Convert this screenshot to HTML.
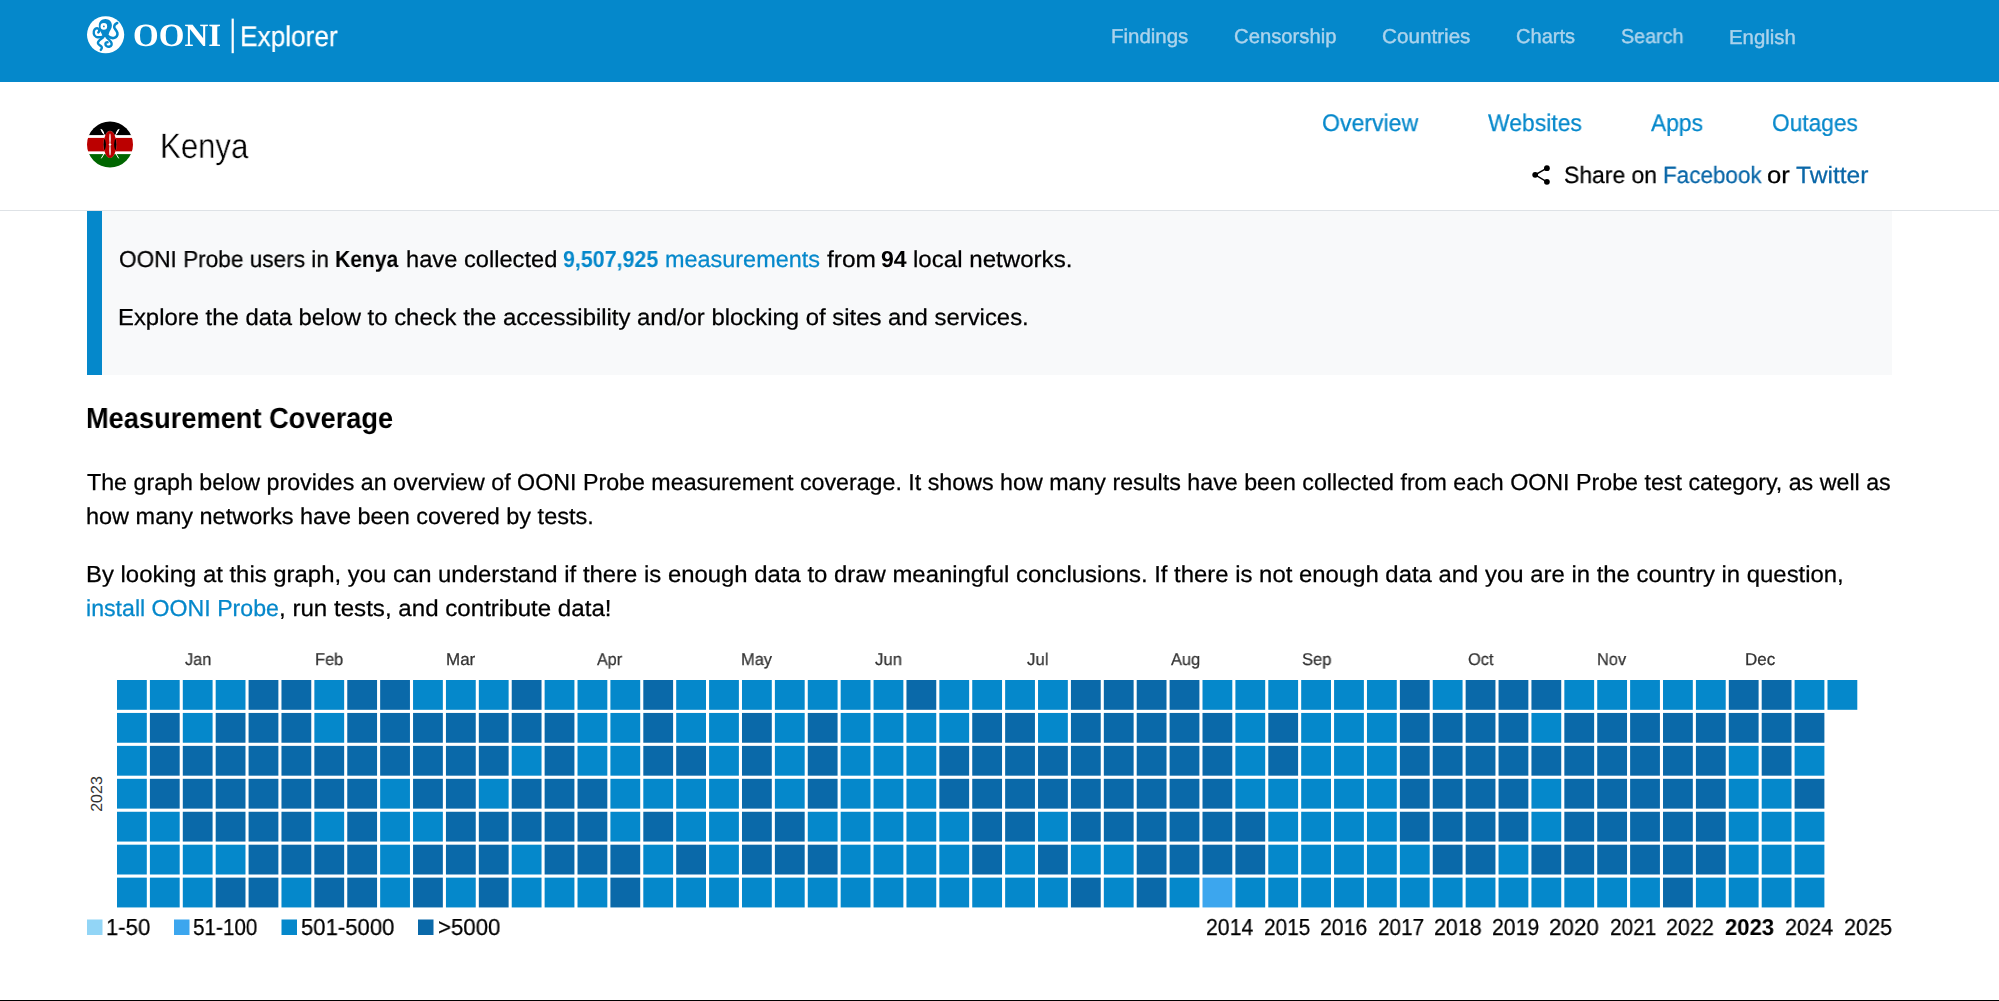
<!DOCTYPE html>
<html><head><meta charset="utf-8"><title>OONI Explorer - Kenya</title>
<style>
html,body{margin:0;padding:0;background:#fff;}
body{width:1999px;height:1001px;position:relative;overflow:hidden;font-family:'Liberation Sans',sans-serif;text-rendering:geometricPrecision;}
.t{position:absolute;white-space:nowrap;line-height:1;transform-origin:0 0;will-change:transform;}
.bar{position:absolute;left:0;top:0;width:1999px;height:82px;background:#0588cb;}
.sep{position:absolute;left:0;top:210px;width:1999px;height:1px;background:#dee2e6;}
.box{position:absolute;left:87px;top:211px;width:1805px;height:164px;background:#f8f9fa;}
.box .bl{position:absolute;left:0;top:0;width:14.5px;height:164px;background:#0588cb;}
.grid{position:absolute;left:0;top:0;}
.bottom{position:absolute;left:0;top:1000px;width:1999px;height:1px;background:#000;}
svg.icon{position:absolute;left:0;top:0;}
</style></head>
<body>
<div class="bar"></div>
<div class="sep"></div>
<div class="box"><div class="bl"></div></div>
<svg class="grid" width="1999" height="1001" viewBox="0 0 1999 1001">
<g font-family="'Liberation Sans', sans-serif" font-size="16" fill="#333">
<text transform="translate(101.5,794) rotate(-90)" text-anchor="middle">2023</text></g>
<rect x="117.00" y="680.00" width="29.8" height="29.8" fill="#0588cb"/><rect x="149.89" y="680.00" width="29.8" height="29.8" fill="#0588cb"/><rect x="182.79" y="680.00" width="29.8" height="29.8" fill="#0588cb"/><rect x="215.68" y="680.00" width="29.8" height="29.8" fill="#0588cb"/><rect x="248.58" y="680.00" width="29.8" height="29.8" fill="#0a69a9"/><rect x="281.47" y="680.00" width="29.8" height="29.8" fill="#0a69a9"/><rect x="314.36" y="680.00" width="29.8" height="29.8" fill="#0588cb"/><rect x="347.26" y="680.00" width="29.8" height="29.8" fill="#0a69a9"/><rect x="380.15" y="680.00" width="29.8" height="29.8" fill="#0a69a9"/><rect x="413.05" y="680.00" width="29.8" height="29.8" fill="#0588cb"/><rect x="445.94" y="680.00" width="29.8" height="29.8" fill="#0588cb"/><rect x="478.83" y="680.00" width="29.8" height="29.8" fill="#0588cb"/><rect x="511.73" y="680.00" width="29.8" height="29.8" fill="#0a69a9"/><rect x="544.62" y="680.00" width="29.8" height="29.8" fill="#0588cb"/><rect x="577.52" y="680.00" width="29.8" height="29.8" fill="#0588cb"/><rect x="610.41" y="680.00" width="29.8" height="29.8" fill="#0588cb"/><rect x="643.30" y="680.00" width="29.8" height="29.8" fill="#0a69a9"/><rect x="676.20" y="680.00" width="29.8" height="29.8" fill="#0588cb"/><rect x="709.09" y="680.00" width="29.8" height="29.8" fill="#0588cb"/><rect x="741.99" y="680.00" width="29.8" height="29.8" fill="#0588cb"/><rect x="774.88" y="680.00" width="29.8" height="29.8" fill="#0588cb"/><rect x="807.77" y="680.00" width="29.8" height="29.8" fill="#0588cb"/><rect x="840.67" y="680.00" width="29.8" height="29.8" fill="#0588cb"/><rect x="873.56" y="680.00" width="29.8" height="29.8" fill="#0588cb"/><rect x="906.46" y="680.00" width="29.8" height="29.8" fill="#0a69a9"/><rect x="939.35" y="680.00" width="29.8" height="29.8" fill="#0588cb"/><rect x="972.24" y="680.00" width="29.8" height="29.8" fill="#0588cb"/><rect x="1005.14" y="680.00" width="29.8" height="29.8" fill="#0588cb"/><rect x="1038.03" y="680.00" width="29.8" height="29.8" fill="#0588cb"/><rect x="1070.93" y="680.00" width="29.8" height="29.8" fill="#0a69a9"/><rect x="1103.82" y="680.00" width="29.8" height="29.8" fill="#0a69a9"/><rect x="1136.71" y="680.00" width="29.8" height="29.8" fill="#0a69a9"/><rect x="1169.61" y="680.00" width="29.8" height="29.8" fill="#0a69a9"/><rect x="1202.50" y="680.00" width="29.8" height="29.8" fill="#0588cb"/><rect x="1235.40" y="680.00" width="29.8" height="29.8" fill="#0588cb"/><rect x="1268.29" y="680.00" width="29.8" height="29.8" fill="#0588cb"/><rect x="1301.18" y="680.00" width="29.8" height="29.8" fill="#0588cb"/><rect x="1334.08" y="680.00" width="29.8" height="29.8" fill="#0588cb"/><rect x="1366.97" y="680.00" width="29.8" height="29.8" fill="#0588cb"/><rect x="1399.87" y="680.00" width="29.8" height="29.8" fill="#0a69a9"/><rect x="1432.76" y="680.00" width="29.8" height="29.8" fill="#0588cb"/><rect x="1465.65" y="680.00" width="29.8" height="29.8" fill="#0a69a9"/><rect x="1498.55" y="680.00" width="29.8" height="29.8" fill="#0a69a9"/><rect x="1531.44" y="680.00" width="29.8" height="29.8" fill="#0a69a9"/><rect x="1564.34" y="680.00" width="29.8" height="29.8" fill="#0588cb"/><rect x="1597.23" y="680.00" width="29.8" height="29.8" fill="#0588cb"/><rect x="1630.12" y="680.00" width="29.8" height="29.8" fill="#0588cb"/><rect x="1663.02" y="680.00" width="29.8" height="29.8" fill="#0588cb"/><rect x="1695.91" y="680.00" width="29.8" height="29.8" fill="#0588cb"/><rect x="1728.81" y="680.00" width="29.8" height="29.8" fill="#0a69a9"/><rect x="1761.70" y="680.00" width="29.8" height="29.8" fill="#0a69a9"/><rect x="1794.59" y="680.00" width="29.8" height="29.8" fill="#0588cb"/><rect x="1827.49" y="680.00" width="29.8" height="29.8" fill="#0588cb"/><rect x="117.00" y="712.94" width="29.8" height="29.8" fill="#0588cb"/><rect x="149.89" y="712.94" width="29.8" height="29.8" fill="#0a69a9"/><rect x="182.79" y="712.94" width="29.8" height="29.8" fill="#0588cb"/><rect x="215.68" y="712.94" width="29.8" height="29.8" fill="#0a69a9"/><rect x="248.58" y="712.94" width="29.8" height="29.8" fill="#0a69a9"/><rect x="281.47" y="712.94" width="29.8" height="29.8" fill="#0a69a9"/><rect x="314.36" y="712.94" width="29.8" height="29.8" fill="#0588cb"/><rect x="347.26" y="712.94" width="29.8" height="29.8" fill="#0a69a9"/><rect x="380.15" y="712.94" width="29.8" height="29.8" fill="#0a69a9"/><rect x="413.05" y="712.94" width="29.8" height="29.8" fill="#0a69a9"/><rect x="445.94" y="712.94" width="29.8" height="29.8" fill="#0a69a9"/><rect x="478.83" y="712.94" width="29.8" height="29.8" fill="#0a69a9"/><rect x="511.73" y="712.94" width="29.8" height="29.8" fill="#0a69a9"/><rect x="544.62" y="712.94" width="29.8" height="29.8" fill="#0a69a9"/><rect x="577.52" y="712.94" width="29.8" height="29.8" fill="#0588cb"/><rect x="610.41" y="712.94" width="29.8" height="29.8" fill="#0588cb"/><rect x="643.30" y="712.94" width="29.8" height="29.8" fill="#0a69a9"/><rect x="676.20" y="712.94" width="29.8" height="29.8" fill="#0588cb"/><rect x="709.09" y="712.94" width="29.8" height="29.8" fill="#0588cb"/><rect x="741.99" y="712.94" width="29.8" height="29.8" fill="#0a69a9"/><rect x="774.88" y="712.94" width="29.8" height="29.8" fill="#0588cb"/><rect x="807.77" y="712.94" width="29.8" height="29.8" fill="#0a69a9"/><rect x="840.67" y="712.94" width="29.8" height="29.8" fill="#0588cb"/><rect x="873.56" y="712.94" width="29.8" height="29.8" fill="#0588cb"/><rect x="906.46" y="712.94" width="29.8" height="29.8" fill="#0588cb"/><rect x="939.35" y="712.94" width="29.8" height="29.8" fill="#0588cb"/><rect x="972.24" y="712.94" width="29.8" height="29.8" fill="#0a69a9"/><rect x="1005.14" y="712.94" width="29.8" height="29.8" fill="#0a69a9"/><rect x="1038.03" y="712.94" width="29.8" height="29.8" fill="#0588cb"/><rect x="1070.93" y="712.94" width="29.8" height="29.8" fill="#0a69a9"/><rect x="1103.82" y="712.94" width="29.8" height="29.8" fill="#0a69a9"/><rect x="1136.71" y="712.94" width="29.8" height="29.8" fill="#0a69a9"/><rect x="1169.61" y="712.94" width="29.8" height="29.8" fill="#0a69a9"/><rect x="1202.50" y="712.94" width="29.8" height="29.8" fill="#0a69a9"/><rect x="1235.40" y="712.94" width="29.8" height="29.8" fill="#0588cb"/><rect x="1268.29" y="712.94" width="29.8" height="29.8" fill="#0a69a9"/><rect x="1301.18" y="712.94" width="29.8" height="29.8" fill="#0588cb"/><rect x="1334.08" y="712.94" width="29.8" height="29.8" fill="#0588cb"/><rect x="1366.97" y="712.94" width="29.8" height="29.8" fill="#0588cb"/><rect x="1399.87" y="712.94" width="29.8" height="29.8" fill="#0a69a9"/><rect x="1432.76" y="712.94" width="29.8" height="29.8" fill="#0a69a9"/><rect x="1465.65" y="712.94" width="29.8" height="29.8" fill="#0a69a9"/><rect x="1498.55" y="712.94" width="29.8" height="29.8" fill="#0a69a9"/><rect x="1531.44" y="712.94" width="29.8" height="29.8" fill="#0588cb"/><rect x="1564.34" y="712.94" width="29.8" height="29.8" fill="#0a69a9"/><rect x="1597.23" y="712.94" width="29.8" height="29.8" fill="#0a69a9"/><rect x="1630.12" y="712.94" width="29.8" height="29.8" fill="#0a69a9"/><rect x="1663.02" y="712.94" width="29.8" height="29.8" fill="#0a69a9"/><rect x="1695.91" y="712.94" width="29.8" height="29.8" fill="#0a69a9"/><rect x="1728.81" y="712.94" width="29.8" height="29.8" fill="#0a69a9"/><rect x="1761.70" y="712.94" width="29.8" height="29.8" fill="#0a69a9"/><rect x="1794.59" y="712.94" width="29.8" height="29.8" fill="#0a69a9"/><rect x="117.00" y="745.88" width="29.8" height="29.8" fill="#0588cb"/><rect x="149.89" y="745.88" width="29.8" height="29.8" fill="#0a69a9"/><rect x="182.79" y="745.88" width="29.8" height="29.8" fill="#0a69a9"/><rect x="215.68" y="745.88" width="29.8" height="29.8" fill="#0a69a9"/><rect x="248.58" y="745.88" width="29.8" height="29.8" fill="#0a69a9"/><rect x="281.47" y="745.88" width="29.8" height="29.8" fill="#0a69a9"/><rect x="314.36" y="745.88" width="29.8" height="29.8" fill="#0a69a9"/><rect x="347.26" y="745.88" width="29.8" height="29.8" fill="#0a69a9"/><rect x="380.15" y="745.88" width="29.8" height="29.8" fill="#0a69a9"/><rect x="413.05" y="745.88" width="29.8" height="29.8" fill="#0a69a9"/><rect x="445.94" y="745.88" width="29.8" height="29.8" fill="#0a69a9"/><rect x="478.83" y="745.88" width="29.8" height="29.8" fill="#0a69a9"/><rect x="511.73" y="745.88" width="29.8" height="29.8" fill="#0588cb"/><rect x="544.62" y="745.88" width="29.8" height="29.8" fill="#0a69a9"/><rect x="577.52" y="745.88" width="29.8" height="29.8" fill="#0588cb"/><rect x="610.41" y="745.88" width="29.8" height="29.8" fill="#0588cb"/><rect x="643.30" y="745.88" width="29.8" height="29.8" fill="#0a69a9"/><rect x="676.20" y="745.88" width="29.8" height="29.8" fill="#0a69a9"/><rect x="709.09" y="745.88" width="29.8" height="29.8" fill="#0588cb"/><rect x="741.99" y="745.88" width="29.8" height="29.8" fill="#0a69a9"/><rect x="774.88" y="745.88" width="29.8" height="29.8" fill="#0588cb"/><rect x="807.77" y="745.88" width="29.8" height="29.8" fill="#0a69a9"/><rect x="840.67" y="745.88" width="29.8" height="29.8" fill="#0588cb"/><rect x="873.56" y="745.88" width="29.8" height="29.8" fill="#0588cb"/><rect x="906.46" y="745.88" width="29.8" height="29.8" fill="#0588cb"/><rect x="939.35" y="745.88" width="29.8" height="29.8" fill="#0a69a9"/><rect x="972.24" y="745.88" width="29.8" height="29.8" fill="#0a69a9"/><rect x="1005.14" y="745.88" width="29.8" height="29.8" fill="#0a69a9"/><rect x="1038.03" y="745.88" width="29.8" height="29.8" fill="#0a69a9"/><rect x="1070.93" y="745.88" width="29.8" height="29.8" fill="#0a69a9"/><rect x="1103.82" y="745.88" width="29.8" height="29.8" fill="#0a69a9"/><rect x="1136.71" y="745.88" width="29.8" height="29.8" fill="#0a69a9"/><rect x="1169.61" y="745.88" width="29.8" height="29.8" fill="#0a69a9"/><rect x="1202.50" y="745.88" width="29.8" height="29.8" fill="#0a69a9"/><rect x="1235.40" y="745.88" width="29.8" height="29.8" fill="#0588cb"/><rect x="1268.29" y="745.88" width="29.8" height="29.8" fill="#0a69a9"/><rect x="1301.18" y="745.88" width="29.8" height="29.8" fill="#0588cb"/><rect x="1334.08" y="745.88" width="29.8" height="29.8" fill="#0588cb"/><rect x="1366.97" y="745.88" width="29.8" height="29.8" fill="#0588cb"/><rect x="1399.87" y="745.88" width="29.8" height="29.8" fill="#0a69a9"/><rect x="1432.76" y="745.88" width="29.8" height="29.8" fill="#0a69a9"/><rect x="1465.65" y="745.88" width="29.8" height="29.8" fill="#0a69a9"/><rect x="1498.55" y="745.88" width="29.8" height="29.8" fill="#0a69a9"/><rect x="1531.44" y="745.88" width="29.8" height="29.8" fill="#0a69a9"/><rect x="1564.34" y="745.88" width="29.8" height="29.8" fill="#0a69a9"/><rect x="1597.23" y="745.88" width="29.8" height="29.8" fill="#0a69a9"/><rect x="1630.12" y="745.88" width="29.8" height="29.8" fill="#0a69a9"/><rect x="1663.02" y="745.88" width="29.8" height="29.8" fill="#0a69a9"/><rect x="1695.91" y="745.88" width="29.8" height="29.8" fill="#0a69a9"/><rect x="1728.81" y="745.88" width="29.8" height="29.8" fill="#0588cb"/><rect x="1761.70" y="745.88" width="29.8" height="29.8" fill="#0a69a9"/><rect x="1794.59" y="745.88" width="29.8" height="29.8" fill="#0588cb"/><rect x="117.00" y="778.82" width="29.8" height="29.8" fill="#0588cb"/><rect x="149.89" y="778.82" width="29.8" height="29.8" fill="#0a69a9"/><rect x="182.79" y="778.82" width="29.8" height="29.8" fill="#0a69a9"/><rect x="215.68" y="778.82" width="29.8" height="29.8" fill="#0a69a9"/><rect x="248.58" y="778.82" width="29.8" height="29.8" fill="#0a69a9"/><rect x="281.47" y="778.82" width="29.8" height="29.8" fill="#0a69a9"/><rect x="314.36" y="778.82" width="29.8" height="29.8" fill="#0a69a9"/><rect x="347.26" y="778.82" width="29.8" height="29.8" fill="#0a69a9"/><rect x="380.15" y="778.82" width="29.8" height="29.8" fill="#0588cb"/><rect x="413.05" y="778.82" width="29.8" height="29.8" fill="#0a69a9"/><rect x="445.94" y="778.82" width="29.8" height="29.8" fill="#0a69a9"/><rect x="478.83" y="778.82" width="29.8" height="29.8" fill="#0588cb"/><rect x="511.73" y="778.82" width="29.8" height="29.8" fill="#0a69a9"/><rect x="544.62" y="778.82" width="29.8" height="29.8" fill="#0a69a9"/><rect x="577.52" y="778.82" width="29.8" height="29.8" fill="#0a69a9"/><rect x="610.41" y="778.82" width="29.8" height="29.8" fill="#0588cb"/><rect x="643.30" y="778.82" width="29.8" height="29.8" fill="#0588cb"/><rect x="676.20" y="778.82" width="29.8" height="29.8" fill="#0588cb"/><rect x="709.09" y="778.82" width="29.8" height="29.8" fill="#0588cb"/><rect x="741.99" y="778.82" width="29.8" height="29.8" fill="#0a69a9"/><rect x="774.88" y="778.82" width="29.8" height="29.8" fill="#0588cb"/><rect x="807.77" y="778.82" width="29.8" height="29.8" fill="#0a69a9"/><rect x="840.67" y="778.82" width="29.8" height="29.8" fill="#0588cb"/><rect x="873.56" y="778.82" width="29.8" height="29.8" fill="#0588cb"/><rect x="906.46" y="778.82" width="29.8" height="29.8" fill="#0588cb"/><rect x="939.35" y="778.82" width="29.8" height="29.8" fill="#0a69a9"/><rect x="972.24" y="778.82" width="29.8" height="29.8" fill="#0a69a9"/><rect x="1005.14" y="778.82" width="29.8" height="29.8" fill="#0a69a9"/><rect x="1038.03" y="778.82" width="29.8" height="29.8" fill="#0a69a9"/><rect x="1070.93" y="778.82" width="29.8" height="29.8" fill="#0a69a9"/><rect x="1103.82" y="778.82" width="29.8" height="29.8" fill="#0a69a9"/><rect x="1136.71" y="778.82" width="29.8" height="29.8" fill="#0a69a9"/><rect x="1169.61" y="778.82" width="29.8" height="29.8" fill="#0a69a9"/><rect x="1202.50" y="778.82" width="29.8" height="29.8" fill="#0a69a9"/><rect x="1235.40" y="778.82" width="29.8" height="29.8" fill="#0588cb"/><rect x="1268.29" y="778.82" width="29.8" height="29.8" fill="#0588cb"/><rect x="1301.18" y="778.82" width="29.8" height="29.8" fill="#0588cb"/><rect x="1334.08" y="778.82" width="29.8" height="29.8" fill="#0588cb"/><rect x="1366.97" y="778.82" width="29.8" height="29.8" fill="#0588cb"/><rect x="1399.87" y="778.82" width="29.8" height="29.8" fill="#0a69a9"/><rect x="1432.76" y="778.82" width="29.8" height="29.8" fill="#0a69a9"/><rect x="1465.65" y="778.82" width="29.8" height="29.8" fill="#0a69a9"/><rect x="1498.55" y="778.82" width="29.8" height="29.8" fill="#0a69a9"/><rect x="1531.44" y="778.82" width="29.8" height="29.8" fill="#0588cb"/><rect x="1564.34" y="778.82" width="29.8" height="29.8" fill="#0a69a9"/><rect x="1597.23" y="778.82" width="29.8" height="29.8" fill="#0a69a9"/><rect x="1630.12" y="778.82" width="29.8" height="29.8" fill="#0a69a9"/><rect x="1663.02" y="778.82" width="29.8" height="29.8" fill="#0a69a9"/><rect x="1695.91" y="778.82" width="29.8" height="29.8" fill="#0a69a9"/><rect x="1728.81" y="778.82" width="29.8" height="29.8" fill="#0588cb"/><rect x="1761.70" y="778.82" width="29.8" height="29.8" fill="#0588cb"/><rect x="1794.59" y="778.82" width="29.8" height="29.8" fill="#0a69a9"/><rect x="117.00" y="811.76" width="29.8" height="29.8" fill="#0588cb"/><rect x="149.89" y="811.76" width="29.8" height="29.8" fill="#0588cb"/><rect x="182.79" y="811.76" width="29.8" height="29.8" fill="#0a69a9"/><rect x="215.68" y="811.76" width="29.8" height="29.8" fill="#0a69a9"/><rect x="248.58" y="811.76" width="29.8" height="29.8" fill="#0a69a9"/><rect x="281.47" y="811.76" width="29.8" height="29.8" fill="#0a69a9"/><rect x="314.36" y="811.76" width="29.8" height="29.8" fill="#0588cb"/><rect x="347.26" y="811.76" width="29.8" height="29.8" fill="#0a69a9"/><rect x="380.15" y="811.76" width="29.8" height="29.8" fill="#0588cb"/><rect x="413.05" y="811.76" width="29.8" height="29.8" fill="#0588cb"/><rect x="445.94" y="811.76" width="29.8" height="29.8" fill="#0a69a9"/><rect x="478.83" y="811.76" width="29.8" height="29.8" fill="#0a69a9"/><rect x="511.73" y="811.76" width="29.8" height="29.8" fill="#0a69a9"/><rect x="544.62" y="811.76" width="29.8" height="29.8" fill="#0a69a9"/><rect x="577.52" y="811.76" width="29.8" height="29.8" fill="#0a69a9"/><rect x="610.41" y="811.76" width="29.8" height="29.8" fill="#0588cb"/><rect x="643.30" y="811.76" width="29.8" height="29.8" fill="#0a69a9"/><rect x="676.20" y="811.76" width="29.8" height="29.8" fill="#0588cb"/><rect x="709.09" y="811.76" width="29.8" height="29.8" fill="#0588cb"/><rect x="741.99" y="811.76" width="29.8" height="29.8" fill="#0a69a9"/><rect x="774.88" y="811.76" width="29.8" height="29.8" fill="#0a69a9"/><rect x="807.77" y="811.76" width="29.8" height="29.8" fill="#0588cb"/><rect x="840.67" y="811.76" width="29.8" height="29.8" fill="#0588cb"/><rect x="873.56" y="811.76" width="29.8" height="29.8" fill="#0588cb"/><rect x="906.46" y="811.76" width="29.8" height="29.8" fill="#0588cb"/><rect x="939.35" y="811.76" width="29.8" height="29.8" fill="#0588cb"/><rect x="972.24" y="811.76" width="29.8" height="29.8" fill="#0a69a9"/><rect x="1005.14" y="811.76" width="29.8" height="29.8" fill="#0a69a9"/><rect x="1038.03" y="811.76" width="29.8" height="29.8" fill="#0588cb"/><rect x="1070.93" y="811.76" width="29.8" height="29.8" fill="#0a69a9"/><rect x="1103.82" y="811.76" width="29.8" height="29.8" fill="#0a69a9"/><rect x="1136.71" y="811.76" width="29.8" height="29.8" fill="#0a69a9"/><rect x="1169.61" y="811.76" width="29.8" height="29.8" fill="#0a69a9"/><rect x="1202.50" y="811.76" width="29.8" height="29.8" fill="#0a69a9"/><rect x="1235.40" y="811.76" width="29.8" height="29.8" fill="#0a69a9"/><rect x="1268.29" y="811.76" width="29.8" height="29.8" fill="#0588cb"/><rect x="1301.18" y="811.76" width="29.8" height="29.8" fill="#0588cb"/><rect x="1334.08" y="811.76" width="29.8" height="29.8" fill="#0588cb"/><rect x="1366.97" y="811.76" width="29.8" height="29.8" fill="#0588cb"/><rect x="1399.87" y="811.76" width="29.8" height="29.8" fill="#0a69a9"/><rect x="1432.76" y="811.76" width="29.8" height="29.8" fill="#0a69a9"/><rect x="1465.65" y="811.76" width="29.8" height="29.8" fill="#0a69a9"/><rect x="1498.55" y="811.76" width="29.8" height="29.8" fill="#0a69a9"/><rect x="1531.44" y="811.76" width="29.8" height="29.8" fill="#0588cb"/><rect x="1564.34" y="811.76" width="29.8" height="29.8" fill="#0a69a9"/><rect x="1597.23" y="811.76" width="29.8" height="29.8" fill="#0a69a9"/><rect x="1630.12" y="811.76" width="29.8" height="29.8" fill="#0a69a9"/><rect x="1663.02" y="811.76" width="29.8" height="29.8" fill="#0a69a9"/><rect x="1695.91" y="811.76" width="29.8" height="29.8" fill="#0a69a9"/><rect x="1728.81" y="811.76" width="29.8" height="29.8" fill="#0588cb"/><rect x="1761.70" y="811.76" width="29.8" height="29.8" fill="#0588cb"/><rect x="1794.59" y="811.76" width="29.8" height="29.8" fill="#0588cb"/><rect x="117.00" y="844.70" width="29.8" height="29.8" fill="#0588cb"/><rect x="149.89" y="844.70" width="29.8" height="29.8" fill="#0588cb"/><rect x="182.79" y="844.70" width="29.8" height="29.8" fill="#0588cb"/><rect x="215.68" y="844.70" width="29.8" height="29.8" fill="#0588cb"/><rect x="248.58" y="844.70" width="29.8" height="29.8" fill="#0a69a9"/><rect x="281.47" y="844.70" width="29.8" height="29.8" fill="#0a69a9"/><rect x="314.36" y="844.70" width="29.8" height="29.8" fill="#0a69a9"/><rect x="347.26" y="844.70" width="29.8" height="29.8" fill="#0a69a9"/><rect x="380.15" y="844.70" width="29.8" height="29.8" fill="#0588cb"/><rect x="413.05" y="844.70" width="29.8" height="29.8" fill="#0a69a9"/><rect x="445.94" y="844.70" width="29.8" height="29.8" fill="#0a69a9"/><rect x="478.83" y="844.70" width="29.8" height="29.8" fill="#0a69a9"/><rect x="511.73" y="844.70" width="29.8" height="29.8" fill="#0588cb"/><rect x="544.62" y="844.70" width="29.8" height="29.8" fill="#0a69a9"/><rect x="577.52" y="844.70" width="29.8" height="29.8" fill="#0a69a9"/><rect x="610.41" y="844.70" width="29.8" height="29.8" fill="#0a69a9"/><rect x="643.30" y="844.70" width="29.8" height="29.8" fill="#0588cb"/><rect x="676.20" y="844.70" width="29.8" height="29.8" fill="#0a69a9"/><rect x="709.09" y="844.70" width="29.8" height="29.8" fill="#0588cb"/><rect x="741.99" y="844.70" width="29.8" height="29.8" fill="#0a69a9"/><rect x="774.88" y="844.70" width="29.8" height="29.8" fill="#0a69a9"/><rect x="807.77" y="844.70" width="29.8" height="29.8" fill="#0a69a9"/><rect x="840.67" y="844.70" width="29.8" height="29.8" fill="#0588cb"/><rect x="873.56" y="844.70" width="29.8" height="29.8" fill="#0588cb"/><rect x="906.46" y="844.70" width="29.8" height="29.8" fill="#0588cb"/><rect x="939.35" y="844.70" width="29.8" height="29.8" fill="#0588cb"/><rect x="972.24" y="844.70" width="29.8" height="29.8" fill="#0a69a9"/><rect x="1005.14" y="844.70" width="29.8" height="29.8" fill="#0588cb"/><rect x="1038.03" y="844.70" width="29.8" height="29.8" fill="#0a69a9"/><rect x="1070.93" y="844.70" width="29.8" height="29.8" fill="#0588cb"/><rect x="1103.82" y="844.70" width="29.8" height="29.8" fill="#0588cb"/><rect x="1136.71" y="844.70" width="29.8" height="29.8" fill="#0a69a9"/><rect x="1169.61" y="844.70" width="29.8" height="29.8" fill="#0a69a9"/><rect x="1202.50" y="844.70" width="29.8" height="29.8" fill="#0a69a9"/><rect x="1235.40" y="844.70" width="29.8" height="29.8" fill="#0a69a9"/><rect x="1268.29" y="844.70" width="29.8" height="29.8" fill="#0588cb"/><rect x="1301.18" y="844.70" width="29.8" height="29.8" fill="#0588cb"/><rect x="1334.08" y="844.70" width="29.8" height="29.8" fill="#0588cb"/><rect x="1366.97" y="844.70" width="29.8" height="29.8" fill="#0588cb"/><rect x="1399.87" y="844.70" width="29.8" height="29.8" fill="#0588cb"/><rect x="1432.76" y="844.70" width="29.8" height="29.8" fill="#0a69a9"/><rect x="1465.65" y="844.70" width="29.8" height="29.8" fill="#0a69a9"/><rect x="1498.55" y="844.70" width="29.8" height="29.8" fill="#0588cb"/><rect x="1531.44" y="844.70" width="29.8" height="29.8" fill="#0a69a9"/><rect x="1564.34" y="844.70" width="29.8" height="29.8" fill="#0a69a9"/><rect x="1597.23" y="844.70" width="29.8" height="29.8" fill="#0a69a9"/><rect x="1630.12" y="844.70" width="29.8" height="29.8" fill="#0a69a9"/><rect x="1663.02" y="844.70" width="29.8" height="29.8" fill="#0a69a9"/><rect x="1695.91" y="844.70" width="29.8" height="29.8" fill="#0a69a9"/><rect x="1728.81" y="844.70" width="29.8" height="29.8" fill="#0588cb"/><rect x="1761.70" y="844.70" width="29.8" height="29.8" fill="#0588cb"/><rect x="1794.59" y="844.70" width="29.8" height="29.8" fill="#0588cb"/><rect x="117.00" y="877.64" width="29.8" height="29.8" fill="#0588cb"/><rect x="149.89" y="877.64" width="29.8" height="29.8" fill="#0588cb"/><rect x="182.79" y="877.64" width="29.8" height="29.8" fill="#0588cb"/><rect x="215.68" y="877.64" width="29.8" height="29.8" fill="#0a69a9"/><rect x="248.58" y="877.64" width="29.8" height="29.8" fill="#0a69a9"/><rect x="281.47" y="877.64" width="29.8" height="29.8" fill="#0588cb"/><rect x="314.36" y="877.64" width="29.8" height="29.8" fill="#0a69a9"/><rect x="347.26" y="877.64" width="29.8" height="29.8" fill="#0a69a9"/><rect x="380.15" y="877.64" width="29.8" height="29.8" fill="#0588cb"/><rect x="413.05" y="877.64" width="29.8" height="29.8" fill="#0a69a9"/><rect x="445.94" y="877.64" width="29.8" height="29.8" fill="#0588cb"/><rect x="478.83" y="877.64" width="29.8" height="29.8" fill="#0a69a9"/><rect x="511.73" y="877.64" width="29.8" height="29.8" fill="#0588cb"/><rect x="544.62" y="877.64" width="29.8" height="29.8" fill="#0588cb"/><rect x="577.52" y="877.64" width="29.8" height="29.8" fill="#0588cb"/><rect x="610.41" y="877.64" width="29.8" height="29.8" fill="#0a69a9"/><rect x="643.30" y="877.64" width="29.8" height="29.8" fill="#0588cb"/><rect x="676.20" y="877.64" width="29.8" height="29.8" fill="#0588cb"/><rect x="709.09" y="877.64" width="29.8" height="29.8" fill="#0588cb"/><rect x="741.99" y="877.64" width="29.8" height="29.8" fill="#0588cb"/><rect x="774.88" y="877.64" width="29.8" height="29.8" fill="#0588cb"/><rect x="807.77" y="877.64" width="29.8" height="29.8" fill="#0588cb"/><rect x="840.67" y="877.64" width="29.8" height="29.8" fill="#0588cb"/><rect x="873.56" y="877.64" width="29.8" height="29.8" fill="#0588cb"/><rect x="906.46" y="877.64" width="29.8" height="29.8" fill="#0588cb"/><rect x="939.35" y="877.64" width="29.8" height="29.8" fill="#0588cb"/><rect x="972.24" y="877.64" width="29.8" height="29.8" fill="#0588cb"/><rect x="1005.14" y="877.64" width="29.8" height="29.8" fill="#0588cb"/><rect x="1038.03" y="877.64" width="29.8" height="29.8" fill="#0588cb"/><rect x="1070.93" y="877.64" width="29.8" height="29.8" fill="#0a69a9"/><rect x="1103.82" y="877.64" width="29.8" height="29.8" fill="#0588cb"/><rect x="1136.71" y="877.64" width="29.8" height="29.8" fill="#0a69a9"/><rect x="1169.61" y="877.64" width="29.8" height="29.8" fill="#0588cb"/><rect x="1202.50" y="877.64" width="29.8" height="29.8" fill="#3ca6ee"/><rect x="1235.40" y="877.64" width="29.8" height="29.8" fill="#0588cb"/><rect x="1268.29" y="877.64" width="29.8" height="29.8" fill="#0588cb"/><rect x="1301.18" y="877.64" width="29.8" height="29.8" fill="#0588cb"/><rect x="1334.08" y="877.64" width="29.8" height="29.8" fill="#0588cb"/><rect x="1366.97" y="877.64" width="29.8" height="29.8" fill="#0588cb"/><rect x="1399.87" y="877.64" width="29.8" height="29.8" fill="#0588cb"/><rect x="1432.76" y="877.64" width="29.8" height="29.8" fill="#0588cb"/><rect x="1465.65" y="877.64" width="29.8" height="29.8" fill="#0588cb"/><rect x="1498.55" y="877.64" width="29.8" height="29.8" fill="#0588cb"/><rect x="1531.44" y="877.64" width="29.8" height="29.8" fill="#0588cb"/><rect x="1564.34" y="877.64" width="29.8" height="29.8" fill="#0588cb"/><rect x="1597.23" y="877.64" width="29.8" height="29.8" fill="#0588cb"/><rect x="1630.12" y="877.64" width="29.8" height="29.8" fill="#0588cb"/><rect x="1663.02" y="877.64" width="29.8" height="29.8" fill="#0a69a9"/><rect x="1695.91" y="877.64" width="29.8" height="29.8" fill="#0588cb"/><rect x="1728.81" y="877.64" width="29.8" height="29.8" fill="#0588cb"/><rect x="1761.70" y="877.64" width="29.8" height="29.8" fill="#0588cb"/><rect x="1794.59" y="877.64" width="29.8" height="29.8" fill="#0588cb"/>
<rect x="87" y="919.5" width="15.5" height="15.5" fill="#92d5f6"/>
<rect x="174" y="919.5" width="15.5" height="15.5" fill="#3ca6ee"/>
<rect x="281.5" y="919.5" width="15.5" height="15.5" fill="#0588cb"/>
<rect x="418" y="919.5" width="15.5" height="15.5" fill="#0a69a9"/>
</svg>
<svg class="icon" width="1999" height="250" viewBox="0 0 1999 250">
  <!-- logo -->
  <circle cx="105.6" cy="34.75" r="18.6" fill="#fff"/>
  <g fill="none" stroke="#0588cb" stroke-width="2.4" stroke-linecap="round">
    <path d="M103.5 36.3 C101 37.3 98.5 37.6 96.2 36.8 C93.6 35.8 92.9 32 94.5 29.6 C95.8 27.7 98.6 27.8 99.2 29.8 C99.5 30.9 99 31.8 98.3 32.4"/>
    <path d="M107.8 36 C109.5 37.4 111.5 38.4 113.8 38 C116.3 37.5 117.9 35.3 117.4 33 C117 31 115.2 29.5 114.5 28 C113.8 26.2 114.5 24 117.2 23" stroke-width="2.6"/>
    <path d="M103.2 37.4 C101.5 38.8 99.3 40 98.2 41.8 C97.3 43.3 98.6 44.6 100.3 45.6 C101.8 46.5 102.7 47.8 100.8 49.9"/>
    <path d="M106.6 37.4 C108.2 38.8 109.8 40.3 111 42 C112.4 44 111.8 46.3 109.3 46.7 C107.2 47 105.3 45.8 105.4 43.8 C105.5 42.7 106.5 42.2 107.6 42.3"/>
  </g>
  <path d="M105.4 19 C109.2 19 111.9 21.8 111.9 25.3 C111.9 28.5 110 30.5 109.4 32 C108.8 33.5 108.5 35 108.3 37 L102.6 37 C102.4 35 101.6 33.5 100.8 32 C99.8 30.3 98.8 28.5 98.8 25.3 C98.8 21.8 101.6 19 105.4 19 Z" fill="#0588cb"/>
  <circle cx="103.85" cy="26.4" r="3.3" fill="#fff"/>
  <circle cx="103.85" cy="26.4" r="0.9" fill="#0588cb"/>
  <rect x="231.6" y="18.6" width="2.2" height="34.6" fill="#fff"/>
  <!-- flag -->
  <defs><clipPath id="fc"><circle cx="110" cy="144.5" r="23"/></clipPath>
  <clipPath id="sh"><ellipse cx="110" cy="144.4" rx="6.4" ry="13.5"/></clipPath></defs>
  <g clip-path="url(#fc)">
    <rect x="85" y="120" width="50" height="15.3" fill="#000"/>
    <rect x="85" y="135.3" width="50" height="2.6" fill="#fff"/>
    <rect x="85" y="137.9" width="50" height="13.7" fill="#bb0000"/>
    <rect x="85" y="151.6" width="50" height="2.5" fill="#fff"/>
    <rect x="85" y="154.1" width="50" height="15" fill="#006600"/>
    <g stroke="#fff" stroke-width="1" stroke-linecap="round"><line x1="101" y1="129.3" x2="118.5" y2="158"/><line x1="119" y1="129.3" x2="101.5" y2="158"/></g>
    <g fill="#fff"><ellipse cx="102.6" cy="131.6" rx="0.9" ry="2.6" transform="rotate(-31 102.6 131.6)"/><ellipse cx="117.4" cy="131.6" rx="0.9" ry="2.6" transform="rotate(31 117.4 131.6)"/></g>
    <ellipse cx="110" cy="144.4" rx="6.6" ry="13.7" fill="#fff" opacity="0.5"/>
    <g clip-path="url(#sh)">
      <rect x="100" y="128" width="20" height="32" fill="#bb0000"/>
      <ellipse cx="103.3" cy="144.4" rx="2.6" ry="6" fill="#000"/>
      <ellipse cx="116.7" cy="144.4" rx="2.6" ry="6" fill="#000"/>
    </g>
    <ellipse cx="110" cy="138.6" rx="0.95" ry="5.2" fill="#fff" opacity="0.75"/>
    <ellipse cx="110" cy="150.4" rx="0.95" ry="5.2" fill="#fff" opacity="0.75"/>
    <circle cx="110" cy="144.5" r="1.25" fill="#fff"/>
  </g>
  <!-- share icon -->
  <g fill="#000"><circle cx="1546.9" cy="168.2" r="2.9"/><circle cx="1535.2" cy="174.8" r="2.9"/><circle cx="1546.9" cy="181.8" r="2.9"/></g>
  <path d="M1546.9 168.2 L1535.2 174.8 L1546.9 181.8" fill="none" stroke="#000" stroke-width="1.5"/>
</svg>
<div class="t" style="left:132.85px;top:19.87px;font-size:32.4px;font-family:'Liberation Serif', serif;font-weight:bold;color:#fff;transform:scaleX(1.0199);">OONI</div>
<div class="t" style="left:240.45px;top:22.56px;font-size:28.4px;font-family:'Liberation Sans', sans-serif;font-weight:normal;color:#fff;transform:scaleX(0.9237);-webkit-text-stroke:0.25px #fff">Explorer</div>
<div class="t" style="left:1110.96px;top:26.87px;font-size:20px;font-family:'Liberation Sans', sans-serif;font-weight:normal;color:#acd3ec;transform:scaleX(1.0233);-webkit-text-stroke:0.4px #acd3ec">Findings</div>
<div class="t" style="left:1233.79px;top:26.87px;font-size:20px;font-family:'Liberation Sans', sans-serif;font-weight:normal;color:#acd3ec;transform:scaleX(1.0137);-webkit-text-stroke:0.4px #acd3ec">Censorship</div>
<div class="t" style="left:1382.07px;top:26.87px;font-size:20px;font-family:'Liberation Sans', sans-serif;font-weight:normal;color:#acd3ec;transform:scaleX(1.0334);-webkit-text-stroke:0.4px #acd3ec">Countries</div>
<div class="t" style="left:1516.00px;top:26.87px;font-size:20px;font-family:'Liberation Sans', sans-serif;font-weight:normal;color:#acd3ec;transform:scaleX(1.0034);-webkit-text-stroke:0.4px #acd3ec">Charts</div>
<div class="t" style="left:1620.81px;top:26.87px;font-size:20px;font-family:'Liberation Sans', sans-serif;font-weight:normal;color:#acd3ec;transform:scaleX(0.9862);-webkit-text-stroke:0.4px #acd3ec">Search</div>
<div class="t" style="left:1728.67px;top:28.17px;font-size:20px;font-family:'Liberation Sans', sans-serif;font-weight:normal;color:#acd3ec;transform:scaleX(1.0180);-webkit-text-stroke:0.4px #acd3ec">English</div>
<div class="t" style="left:160.27px;top:128.50px;font-size:35.2px;font-family:'Liberation Sans', sans-serif;font-weight:normal;color:#000;transform:scaleX(0.8851);-webkit-text-stroke:0.4px #fff">Kenya</div>
<div class="t" style="left:1321.74px;top:111.98px;font-size:24px;font-family:'Liberation Sans', sans-serif;font-weight:normal;color:#0588cb;transform:scaleX(0.9617);-webkit-text-stroke:0.25px #0588cb">Overview</div>
<div class="t" style="left:1488.30px;top:111.98px;font-size:24px;font-family:'Liberation Sans', sans-serif;font-weight:normal;color:#0588cb;transform:scaleX(0.9552);-webkit-text-stroke:0.25px #0588cb">Websites</div>
<div class="t" style="left:1651.30px;top:111.98px;font-size:24px;font-family:'Liberation Sans', sans-serif;font-weight:normal;color:#0588cb;transform:scaleX(0.9499);-webkit-text-stroke:0.25px #0588cb">Apps</div>
<div class="t" style="left:1771.96px;top:111.98px;font-size:24px;font-family:'Liberation Sans', sans-serif;font-weight:normal;color:#0588cb;transform:scaleX(0.9457);-webkit-text-stroke:0.25px #0588cb">Outages</div>
<div class="t" style="left:1563.92px;top:163.71px;font-size:23.5px;font-family:'Liberation Sans', sans-serif;font-weight:normal;color:#000;transform:scaleX(0.9752);-webkit-text-stroke:0.25px #000">Share on</div>
<div class="t" style="left:1662.99px;top:163.71px;font-size:23.5px;font-family:'Liberation Sans', sans-serif;font-weight:normal;color:#0a67a8;transform:scaleX(0.9551);-webkit-text-stroke:0.25px #0a67a8">Facebook</div>
<div class="t" style="left:1767.42px;top:163.71px;font-size:23.5px;font-family:'Liberation Sans', sans-serif;font-weight:normal;color:#000;transform:scaleX(1.0931);-webkit-text-stroke:0.25px #000">or</div>
<div class="t" style="left:1796.48px;top:163.71px;font-size:23.5px;font-family:'Liberation Sans', sans-serif;font-weight:normal;color:#0a67a8;transform:scaleX(1.0471);-webkit-text-stroke:0.25px #0a67a8">Twitter</div>
<div class="t" style="left:118.72px;top:247.65px;font-size:23.1px;font-family:'Liberation Sans', sans-serif;font-weight:normal;color:#000;transform:scaleX(0.9795);-webkit-text-stroke:0.25px #000">OONI Probe users in</div>
<div class="t" style="left:335.03px;top:247.65px;font-size:23.1px;font-family:'Liberation Sans', sans-serif;font-weight:bold;color:#000;transform:scaleX(0.9119);">Kenya</div>
<div class="t" style="left:405.66px;top:247.65px;font-size:23.1px;font-family:'Liberation Sans', sans-serif;font-weight:normal;color:#000;transform:scaleX(1.0247);-webkit-text-stroke:0.25px #000">have collected</div>
<div class="t" style="left:563.16px;top:247.65px;font-size:23.1px;font-family:'Liberation Sans', sans-serif;font-weight:bold;color:#0588cb;transform:scaleX(0.9269);">9,507,925</div>
<div class="t" style="left:664.88px;top:247.65px;font-size:23.1px;font-family:'Liberation Sans', sans-serif;font-weight:normal;color:#0588cb;transform:scaleX(1.0144);-webkit-text-stroke:0.25px #0588cb">measurements</div>
<div class="t" style="left:826.58px;top:247.65px;font-size:23.1px;font-family:'Liberation Sans', sans-serif;font-weight:normal;color:#000;transform:scaleX(1.0594);-webkit-text-stroke:0.25px #000">from</div>
<div class="t" style="left:881.21px;top:247.65px;font-size:23.1px;font-family:'Liberation Sans', sans-serif;font-weight:bold;color:#000;transform:scaleX(0.9860);">94</div>
<div class="t" style="left:912.83px;top:247.65px;font-size:23.1px;font-family:'Liberation Sans', sans-serif;font-weight:normal;color:#000;transform:scaleX(1.0438);-webkit-text-stroke:0.25px #000">local networks.</div>
<div class="t" style="left:117.84px;top:305.65px;font-size:23.1px;font-family:'Liberation Sans', sans-serif;font-weight:normal;color:#000;transform:scaleX(1.0342);-webkit-text-stroke:0.25px #000">Explore the data below to check the accessibility and/or blocking of sites and services.</div>
<div class="t" style="left:86.00px;top:405.38px;font-size:29.2px;font-family:'Liberation Sans', sans-serif;font-weight:bold;color:#000;transform:scaleX(0.9327);">Measurement Coverage</div>
<div class="t" style="left:87.20px;top:470.85px;font-size:23.1px;font-family:'Liberation Sans', sans-serif;font-weight:normal;color:#000;transform:scaleX(1.0061);-webkit-text-stroke:0.25px #000">The graph below provides an overview of OONI Probe measurement coverage. It shows how many results have been collected from each OONI Probe test category, as well as</div>
<div class="t" style="left:86.17px;top:504.95px;font-size:23.1px;font-family:'Liberation Sans', sans-serif;font-weight:normal;color:#000;transform:scaleX(1.0168);-webkit-text-stroke:0.25px #000">how many networks have been covered by tests.</div>
<div class="t" style="left:85.84px;top:562.75px;font-size:23.1px;font-family:'Liberation Sans', sans-serif;font-weight:normal;color:#000;transform:scaleX(1.0349);-webkit-text-stroke:0.25px #000">By looking at this graph, you can understand if there is enough data to draw meaningful conclusions. If there is not enough data and you are in the country in question,</div>
<div class="t" style="left:86.30px;top:597.15px;font-size:23.1px;font-family:'Liberation Sans', sans-serif;font-weight:normal;color:#0588cb;transform:scaleX(1.0020);-webkit-text-stroke:0.25px #0588cb">install OONI Probe</div>
<div class="t" style="left:278.91px;top:597.15px;font-size:23.1px;font-family:'Liberation Sans', sans-serif;font-weight:normal;color:#000;transform:scaleX(1.0444);-webkit-text-stroke:0.25px #000">, run tests, and contribute data!</div>
<div class="t" style="left:105.87px;top:915.65px;font-size:23.1px;font-family:'Liberation Sans', sans-serif;font-weight:normal;color:#000;transform:scaleX(0.9568);-webkit-text-stroke:0.25px #000">1-50</div>
<div class="t" style="left:193.19px;top:915.65px;font-size:23.1px;font-family:'Liberation Sans', sans-serif;font-weight:normal;color:#000;transform:scaleX(0.8948);-webkit-text-stroke:0.25px #000">51-100</div>
<div class="t" style="left:301.14px;top:915.65px;font-size:23.1px;font-family:'Liberation Sans', sans-serif;font-weight:normal;color:#000;transform:scaleX(0.9565);-webkit-text-stroke:0.25px #000">501-5000</div>
<div class="t" style="left:437.74px;top:915.65px;font-size:23.1px;font-family:'Liberation Sans', sans-serif;font-weight:normal;color:#000;transform:scaleX(0.9614);-webkit-text-stroke:0.25px #000">&gt;5000</div>
<div class="t" style="left:185.01px;top:651.11px;font-size:17px;font-family:'Liberation Sans', sans-serif;font-weight:normal;color:#333;transform:scaleX(0.9597);-webkit-text-stroke:0.25px #333">Jan</div>
<div class="t" style="left:315.24px;top:651.11px;font-size:17px;font-family:'Liberation Sans', sans-serif;font-weight:normal;color:#333;transform:scaleX(0.9657);-webkit-text-stroke:0.25px #333">Feb</div>
<div class="t" style="left:446.42px;top:651.11px;font-size:17px;font-family:'Liberation Sans', sans-serif;font-weight:normal;color:#333;transform:scaleX(0.9850);-webkit-text-stroke:0.25px #333">Mar</div>
<div class="t" style="left:596.70px;top:651.11px;font-size:17px;font-family:'Liberation Sans', sans-serif;font-weight:normal;color:#333;transform:scaleX(0.9506);-webkit-text-stroke:0.25px #333">Apr</div>
<div class="t" style="left:741.04px;top:651.11px;font-size:17px;font-family:'Liberation Sans', sans-serif;font-weight:normal;color:#333;transform:scaleX(0.9670);-webkit-text-stroke:0.25px #333">May</div>
<div class="t" style="left:875.30px;top:651.11px;font-size:17px;font-family:'Liberation Sans', sans-serif;font-weight:normal;color:#333;transform:scaleX(0.9826);-webkit-text-stroke:0.25px #333">Jun</div>
<div class="t" style="left:1026.50px;top:651.11px;font-size:17px;font-family:'Liberation Sans', sans-serif;font-weight:normal;color:#333;transform:scaleX(0.9876);-webkit-text-stroke:0.25px #333">Jul</div>
<div class="t" style="left:1170.80px;top:651.11px;font-size:17px;font-family:'Liberation Sans', sans-serif;font-weight:normal;color:#333;transform:scaleX(0.9660);-webkit-text-stroke:0.25px #333">Aug</div>
<div class="t" style="left:1301.72px;top:651.11px;font-size:17px;font-family:'Liberation Sans', sans-serif;font-weight:normal;color:#333;transform:scaleX(0.9760);-webkit-text-stroke:0.25px #333">Sep</div>
<div class="t" style="left:1467.53px;top:651.11px;font-size:17px;font-family:'Liberation Sans', sans-serif;font-weight:normal;color:#333;transform:scaleX(0.9638);-webkit-text-stroke:0.25px #333">Oct</div>
<div class="t" style="left:1597.35px;top:651.11px;font-size:17px;font-family:'Liberation Sans', sans-serif;font-weight:normal;color:#333;transform:scaleX(0.9643);-webkit-text-stroke:0.25px #333">Nov</div>
<div class="t" style="left:1745.22px;top:651.11px;font-size:17px;font-family:'Liberation Sans', sans-serif;font-weight:normal;color:#333;transform:scaleX(0.9884);-webkit-text-stroke:0.25px #333">Dec</div>
<div class="t" style="left:1205.99px;top:915.75px;font-size:23.1px;font-family:'Liberation Sans', sans-serif;font-weight:normal;color:#000;transform:scaleX(0.9206);-webkit-text-stroke:0.25px #000">2014</div>
<div class="t" style="left:1263.91px;top:915.75px;font-size:23.1px;font-family:'Liberation Sans', sans-serif;font-weight:normal;color:#000;transform:scaleX(0.9019);-webkit-text-stroke:0.25px #000">2015</div>
<div class="t" style="left:1320.49px;top:915.75px;font-size:23.1px;font-family:'Liberation Sans', sans-serif;font-weight:normal;color:#000;transform:scaleX(0.9201);-webkit-text-stroke:0.25px #000">2016</div>
<div class="t" style="left:1378.41px;top:915.75px;font-size:23.1px;font-family:'Liberation Sans', sans-serif;font-weight:normal;color:#000;transform:scaleX(0.8974);-webkit-text-stroke:0.25px #000">2017</div>
<div class="t" style="left:1433.78px;top:915.75px;font-size:23.1px;font-family:'Liberation Sans', sans-serif;font-weight:normal;color:#000;transform:scaleX(0.9282);-webkit-text-stroke:0.25px #000">2018</div>
<div class="t" style="left:1491.69px;top:915.75px;font-size:23.1px;font-family:'Liberation Sans', sans-serif;font-weight:normal;color:#000;transform:scaleX(0.9200);-webkit-text-stroke:0.25px #000">2019</div>
<div class="t" style="left:1548.93px;top:915.75px;font-size:23.1px;font-family:'Liberation Sans', sans-serif;font-weight:normal;color:#000;transform:scaleX(0.9708);-webkit-text-stroke:0.25px #000">2020</div>
<div class="t" style="left:1610.01px;top:915.75px;font-size:23.1px;font-family:'Liberation Sans', sans-serif;font-weight:normal;color:#000;transform:scaleX(0.9017);-webkit-text-stroke:0.25px #000">2021</div>
<div class="t" style="left:1666.37px;top:915.75px;font-size:23.1px;font-family:'Liberation Sans', sans-serif;font-weight:normal;color:#000;transform:scaleX(0.9320);-webkit-text-stroke:0.25px #000">2022</div>
<div class="t" style="left:1725.04px;top:915.75px;font-size:23.1px;font-family:'Liberation Sans', sans-serif;font-weight:bold;color:#000;transform:scaleX(0.9550);">2023</div>
<div class="t" style="left:1785.27px;top:915.75px;font-size:23.1px;font-family:'Liberation Sans', sans-serif;font-weight:normal;color:#000;transform:scaleX(0.9387);-webkit-text-stroke:0.25px #000">2024</div>
<div class="t" style="left:1843.87px;top:915.75px;font-size:23.1px;font-family:'Liberation Sans', sans-serif;font-weight:normal;color:#000;transform:scaleX(0.9363);-webkit-text-stroke:0.25px #000">2025</div>
<div class="bottom"></div>
</body></html>
